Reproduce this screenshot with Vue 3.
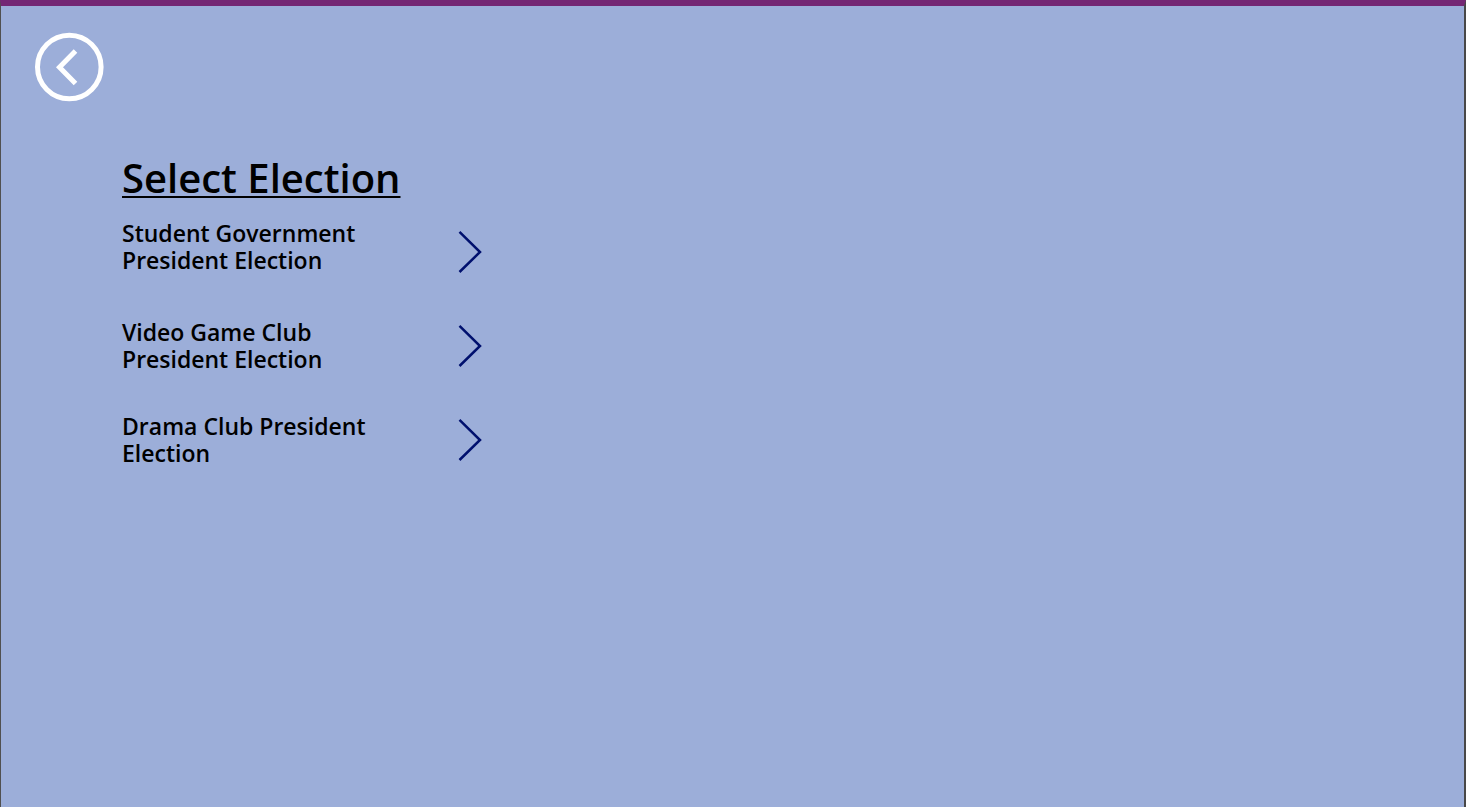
<script setup>
const elections = [
  'Student Government President Election',
  'Video Game Club President Election',
  'Drama Club President Election',
]
</script>

<template>
  <div class="screen">
    <header>
      <button class="back" type="button" aria-label="Back">
        <svg viewBox="0 0 70 70" fill="none" stroke="#fff">
          <circle cx="35.300" cy="35" r="31.800" stroke-width="5" />
          <path d="M41.500 19 25.500 35.300 41.500 51.500" stroke-width="5" />
        </svg>
      </button>
    </header>
    <main>
      <h1>Select Election</h1>
      <ul>
        <li v-for="name in elections" :key="name">
          <span class="name">{{ name }}</span>
          <button class="next" type="button" :aria-label="'Open ' + name">
            <svg viewBox="0 0 24 44" fill="none" stroke="#00106e" stroke-width="2.500">
              <path d="M1.500 1.800 22 22 1.500 42" />
            </svg>
          </button>
        </li>
      </ul>
    </main>
  </div>
</template>

<style>
body {
  margin: 0;
  background: #9caed9;
}
</style>

<style scoped>
.screen {
  box-sizing: border-box;
  min-height: 100vh;
  border-top: 6px solid #742774;
  border-left: 1px solid #505050;
  border-right: 2px solid #484848;
  background: #9caed9;
  color: #000;
  font-family: "Open Sans", sans-serif;
  font-weight: 600;
}
header {
  padding: 26px 33px 0;
}
button {
  display: block;
  padding: 0;
  border: 0;
  background: none;
  cursor: pointer;
}
svg {
  display: block;
  width: 100%;
  height: 100%;
}
.back {
  width: 70px;
  height: 70px;
}
main {
  padding: 49px 121px 0;
}
h1 {
  margin: 0;
  font-size: 40px;
  line-height: 54px;
  font-weight: 600;
  text-decoration: underline;
  text-decoration-thickness: 2px;
  text-underline-offset: 3px;
}
ul {
  display: grid;
  gap: 30px;
  max-width: 360px;
  margin: 15px 0 0;
  padding: 0;
  list-style: none;
}
li {
  display: flex;
  justify-content: space-between;
  align-items: center;
  min-height: 64px;
}
li:first-child .name {
  align-self: flex-start;
}
.name {
  max-width: 250px;
  font-size: 23px;
  line-height: 27px;
}
.next {
  width: 24px;
  height: 44px;
}
</style>
